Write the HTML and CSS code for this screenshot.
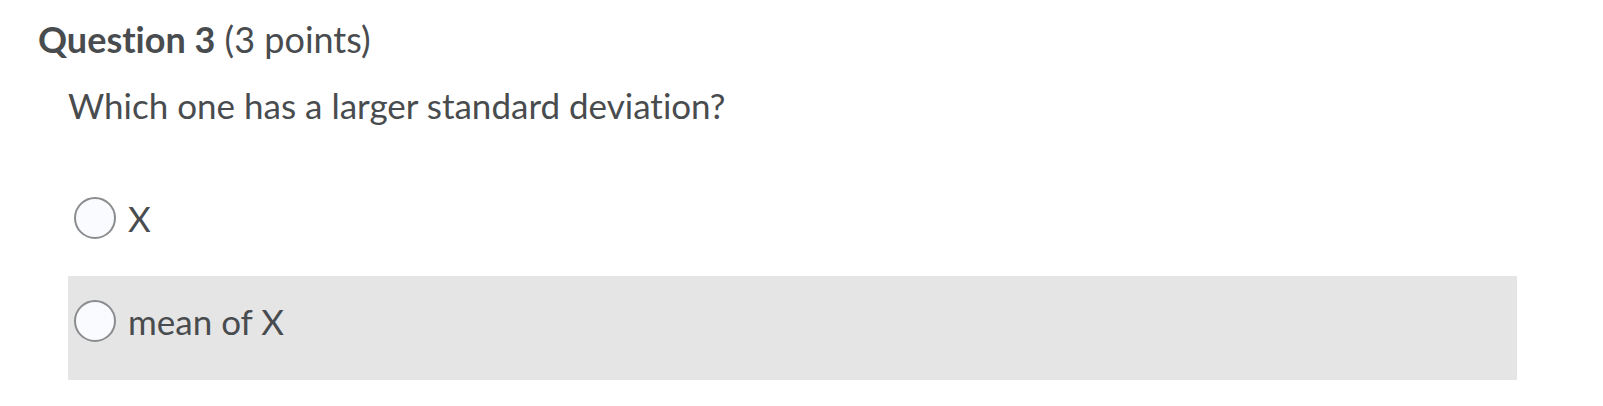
FILE: index.html
```html
<!DOCTYPE html>
<html>
<head>
<meta charset="utf-8">
<link rel="stylesheet" href="styles.css">
</head>
<body>
<div class="quiz">
  <h2 class="q-title"><strong>Question 3</strong> <span class="pts">(3 points)</span></h2>
  <div class="q-body">
    <p class="q-text">Which one has a larger standard deviation?</p>
    <div class="options">
      <label class="opt">
        <span class="radio"></span>
        <span class="opt-text">X</span>
      </label>
      <label class="opt opt-hover">
        <span class="radio"></span>
        <span class="opt-text">mean of X</span>
      </label>
    </div>
  </div>
</div>
</body>
</html>
```
FILE: styles.css
```css
html, body {
  margin: 0;
  padding: 0;
  background: #ffffff;
}
body {
  font-family: Lato, "Open Sans", sans-serif;
  font-variant-ligatures: none;
  color: #494c4e;
  width: 1603px;
  height: 406px;
  overflow: hidden;
}
.quiz {
  padding: 18px 0 0 38px;
}
.q-title {
  margin: 0;
  font-size: 36px;
  line-height: 42px;
  font-weight: 400;
}
.q-title strong {
  font-weight: 700;
}
.q-body {
  padding-left: 30px;
  width: 1449px;
}
.q-text {
  margin: 24px 0 0 0;
  font-size: 35px;
  line-height: 42px;
}
.options {
  margin-top: 71px;
  display: flex;
  flex-direction: column;
}
.opt {
  display: flex;
  align-items: center;
  gap: 12px;
  padding: 0 6px;
  height: 42px;
  font-size: 35px;
  line-height: 42px;
}
.opt-hover {
  margin-top: 37px;
  height: auto;
  padding-top: 24px;
  padding-bottom: 38px;
  background: #e5e5e5;
}
.radio {
  width: 38px;
  height: 38px;
  border: 2px solid #8a8c8e;
  border-radius: 50%;
  background: #f9fbff;
  flex: none;
}
```
